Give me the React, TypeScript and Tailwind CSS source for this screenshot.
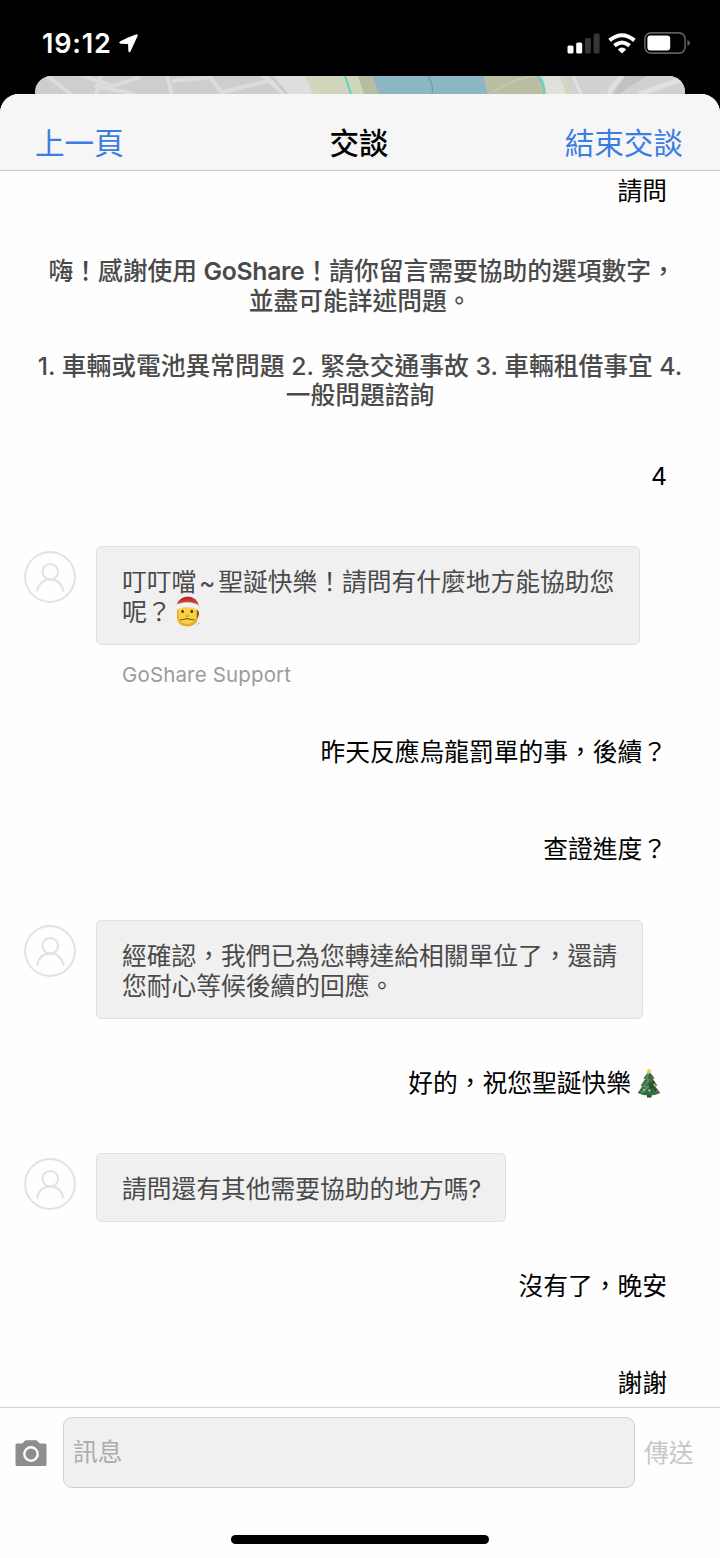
import type { ReactNode } from 'react';
import clsx from 'clsx';

function LocationArrow() {
  return (
    <svg className="h-[19px] w-[19px]" viewBox="0 0 19 19" fill="#fff" stroke="#fff" strokeWidth="0.9" strokeLinejoin="round">
      <path d="M17.2 0.8 C18.2 0.5 18.6 1 18.2 1.9 L11 17.5 C10.6 18.3 9.9 18.2 9.9 17.4 L9.5 9.7 L1.3 9.2 C0.4 9.1 0.4 8.2 1.2 7.8 Q9 3.6 17.2 0.8 Z" />
    </svg>
  );
}

function SignalIcon() {
  return (
    <svg className="h-[21px] w-[33px]" viewBox="0 0 33 21">
      <rect x="0.5" y="12.5" width="6" height="8" rx="1.5" fill="#fff" />
      <rect x="9.2" y="9.5" width="6" height="11" rx="1.5" fill="#fff" />
      <rect x="17.9" y="5" width="6" height="15.5" rx="1.5" fill="#363636" />
      <rect x="26.6" y="0.5" width="6" height="20" rx="1.5" fill="#363636" />
    </svg>
  );
}

function WifiIcon() {
  return (
    <svg className="h-[21px] w-[28px]" viewBox="0 0 28 21" fill="none" stroke="#fff" strokeWidth="4">
      <path d="M1.6 7.4 Q14 -3 26.4 7.4" />
      <path d="M6.4 12.6 Q14 6.4 21.6 12.6" />
      <path d="M14 20.5 L9.8 16.4 Q14 12.8 18.2 16.4 Z" fill="#fff" stroke="none" />
    </svg>
  );
}

function BatteryIcon() {
  return (
    <svg className="h-[22px] w-[47px]" viewBox="0 0 47 22">
      <rect x="0.9" y="0.9" width="40.2" height="20.2" rx="6" fill="none" stroke="#5e5e5e" strokeWidth="1.6" />
      <rect x="3.4" y="3.6" width="22.8" height="14.8" rx="3" fill="#fff" />
      <path d="M43.4 7.8 Q46 9 46 11 Q46 13 43.4 14.2 Z" fill="#5e5e5e" />
    </svg>
  );
}

function MapStrip() {
  return (
    <svg className="block h-[18px] w-full" viewBox="0 0 650 18" preserveAspectRatio="none">
      <rect width="650" height="18" fill="#cecece" />
      <g stroke="#dcdcdc" strokeWidth="4" fill="none">
        <path d="M12 0 L36 18 M43 -2 L78 10 M66 -1 L61 18 M78 10 L105 1 M60 10 L100 18 M132 0 L137 18 M137 5 L175 1 L188 18 M188 16 L240 3" />
      </g>
      <path d="M225 0 L246 18 H282 L270 0 Z" fill="#dedede" />
      <path d="M236 0 L252 18" stroke="#cbcbcb" strokeWidth="3" />
      <path d="M270 0 H338 L344 18 H278 Z" fill="#cfd6bc" />
      <path d="M323 0 H340 L345 18 H329 Z" fill="#b5bda2" />
      <path d="M338 0 H449 L453 18 H344 Z" fill="#8db6c5" />
      <path d="M393 0 Q399 9 397 18" stroke="#6f929e" strokeWidth="1" fill="none" />
      <path d="M449 0 H503 Q512 9 510 18 H453 Z" fill="#b9bea5" />
      <path d="M455 18 Q475 3 500 0" stroke="#c6cab5" strokeWidth="1.5" fill="none" />
      <path d="M505 0 H650 V18 H511 Q511 9 505 0 Z" fill="#d1d1d1" />
      <path d="M508 0 H526 L532 18 H512 Z" fill="#dfe2d9" />
      <path d="M310 0 L316 18 M503 0 Q510 8 509 18" stroke="#62cfc5" strokeWidth="2" fill="none" />
      <path d="M527 0 L534 18" stroke="#d2d8bd" strokeWidth="5" />
      <g stroke="#e0e0e0" fill="none">
        <path d="M538 0 L546 18" strokeWidth="3" />
        <path d="M588 0 Q578 8 574 18 M604 18 L650 2" strokeWidth="5" />
      </g>
      <path d="M590 0 H612 L584 18 H578 Z" fill="#c2c2c2" />
    </svg>
  );
}

function Avatar() {
  return (
    <svg className="mt-[5px] h-[52px] w-[52px] shrink-0" viewBox="0 0 52 52" fill="none" stroke="#e2e2e2" strokeWidth="2">
      <circle cx="26" cy="26" r="24.9" />
      <circle cx="26.3" cy="20.8" r="7.8" />
      <path d="M13 40.5 C14.5 33 19 28.6 26.3 28.6 C33.5 28.6 38 33 39.5 40.5" />
    </svg>
  );
}

function SantaEmoji() {
  return (
    <svg className="-my-2 ml-[2px] inline-block h-[31px] w-[27px] align-[2px]" viewBox="0 0 27 31">
      <path d="M3 10 V21 Q3 30 13 30.5 Q24 30 24 20 V10 Z" fill="#e9ad25" />
      <path d="M23 14 Q25.5 15 25 19 L23 23 Z" fill="#8d5a1b" />
      <path d="M4.5 9 H22 V20 Q22 27.5 13 28 Q4.5 27.5 4.5 20 Z" fill="#fbd044" />
      <ellipse cx="8.6" cy="15.4" rx="1.3" ry="1.7" fill="#4c3414" />
      <ellipse cx="17.8" cy="15.4" rx="1.3" ry="1.7" fill="#4c3414" />
      <path d="M12 18.5 Q11.6 20.6 13.3 20.6 Q15 20.6 14.6 18.5" fill="none" stroke="#d3982a" strokeWidth="0.9" />
      <path d="M6 24 Q9.5 23.8 13.2 22.4 Q17 23.8 20.5 24" fill="none" stroke="#7a5115" strokeWidth="1.1" />
      <path d="M3 8 Q6 0.5 14 0.5 Q23 1 25 10 Z" fill="#c93a2d" />
      <path d="M7 4 Q12 0.5 18 2.5" fill="none" stroke="#a32017" strokeWidth="1" />
      <path d="M1.5 12.5 Q0.5 9 4 8 Q13 4.5 22.5 8 Q26.5 9.5 25.5 13 Q23 14.5 21 12.5 Q13 9.5 5.5 12.5 Q3 14.5 1.5 12.5 Z" fill="#f5f3f1" stroke="#d8d4d0" strokeWidth="0.5" />
      <path d="M23.5 28.5 L26 26.5" stroke="#bdbdbd" strokeWidth="1" />
    </svg>
  );
}

function TreeEmoji() {
  return (
    <svg className="-my-2 ml-[6px] mr-[6px] inline-block h-[30px] w-[24px] align-[2px]" viewBox="0 0 24 30">
      <rect x="10" y="25" width="4.5" height="4.5" fill="#55351d" />
      <path d="M12 2.5 L17.5 10.5 L15.8 11 L20.3 17.5 L18.2 18.3 L23.3 25 Q18 27.8 12 27.3 Q6 27.8 0.7 25 L5.3 18.3 L3.8 17.5 L8.2 11 L6.5 10.5 Z" fill="#2f7041" />
      <path d="M12 4 L9 11 L12 12 L6.5 18 L11 19 L4 25" fill="none" stroke="#579367" strokeWidth="1.8" />
      <path d="M17 13 L15 18 L19 23 M13 15 L14 24" fill="none" stroke="#1c4e2c" strokeWidth="1.6" />
      <path d="M12 0 L13 2 L15 2.4 L13.4 3.8 L13.8 6 L12 4.9 L10.2 6 L10.6 3.8 L9 2.4 L11 2 Z" fill="#f1cf4a" />
      <circle cx="15" cy="9" r="1.3" fill="#b83d3c" />
      <circle cx="17.5" cy="17" r="1.2" fill="#d8b149" />
      <circle cx="9" cy="15.5" r="1.2" fill="#cf4740" />
      <circle cx="7" cy="22" r="1.2" fill="#cfaf58" />
      <circle cx="20" cy="23.5" r="1.2" fill="#c53e3a" />
      <circle cx="12.5" cy="22.5" r="1.2" fill="#9ebfd0" />
    </svg>
  );
}

function CameraIcon() {
  return (
    <svg className="h-[26px] w-[32px]" viewBox="0 0 32 26">
      <path d="M2 3.5 H7.2 L9.6 0.9 Q10.2 0.3 11 0.3 H21 Q21.8 0.3 22.4 0.9 L24.8 3.5 H30 Q31.5 3.5 31.5 5 V24.5 Q31.5 26 30 26 H2 Q0.5 26 0.5 24.5 V5 Q0.5 3.5 2 3.5 Z" fill="#8e8e91" />
      <circle cx="16" cy="14" r="6.7" fill="none" stroke="#fff" strokeWidth="2.4" />
    </svg>
  );
}

function UserMessage({ className, children }: { className: string; children: ReactNode }) {
  return <p className={clsx('h-[30px] shrink-0 whitespace-nowrap pr-[53px] text-right leading-[30px] text-black', className)}>{children}</p>;
}

function SupportMessage({ className, bubbleClassName, children }: { className: string; bubbleClassName: string; children: ReactNode }) {
  return (
    <div className={clsx('flex shrink-0 items-start gap-[20px] pl-[24px]', className)}>
      <Avatar />
      <div className={clsx('whitespace-nowrap rounded-[5px] border-[1.5px] border-[#e0e0e0] bg-[#f0f0f0] pl-[25px] pt-[21px] leading-[29.5px] text-[#4a4a4a]', bubbleClassName)}>
        {children}
      </div>
    </div>
  );
}

export default function App() {
  return (
    <div className="flex h-[1558px] w-[720px] flex-col overflow-hidden bg-black font-['Inter','Noto_Sans_CJK_TC',sans-serif]">
      <div className="flex h-[76px] shrink-0 items-center pl-[42px] pr-[29px] pt-[10px]">
        <span className="w-[77px] whitespace-nowrap pt-[2px] text-[27px] font-semibold leading-[30px] tracking-[0.8px] text-white">19:12</span>
        <LocationArrow />
        <div className="ml-auto flex items-center gap-[8px]">
          <SignalIcon />
          <WifiIcon />
          <BatteryIcon />
        </div>
      </div>

      <div className="mx-[35px] h-[18px] shrink-0 overflow-hidden rounded-t-[16px]">
        <MapStrip />
      </div>

      <div className="flex min-h-0 flex-1 flex-col overflow-hidden rounded-t-[19px] bg-[#fefefe]">
        <header className="grid h-[77px] shrink-0 grid-cols-3 items-center border-b-[1.5px] border-[#cbcbcd] bg-[#f6f6f6] pl-[35px] pr-[37px] pt-[22px] text-[29.6px] leading-[36px]">
          <button className="text-left text-[#3b7de3]">上一頁</button>
          <h1 className="text-center font-medium text-black">交談</h1>
          <button className="text-right text-[#3b7de3]">結束交談</button>
        </header>

        <main className="flex h-[1236px] shrink-0 flex-col overflow-hidden text-[24.75px]">
          <UserMessage className="mt-[5px]">請問</UserMessage>

          <p className="mt-[51px] shrink-0 whitespace-nowrap text-center font-medium leading-[29.5px] text-[#4a4a4a]">
            <span className="block pl-[4px]">
              嗨！感謝使用 <span className="font-semibold tracking-[-0.3px]">GoShare</span>！請你留言需要協助的選項數字，
            </span>
            並盡可能詳述問題。
          </p>
          <p className="mt-[36px] shrink-0 whitespace-nowrap text-center font-medium leading-[29px] text-[#4a4a4a]">
            1. 車輛或電池異常問題 2. 緊急交通事故 3. 車輛租借事宜 4.
            <br />
            一般問題諮詢
          </p>

          <UserMessage className="mt-[51px]">4</UserMessage>

          <SupportMessage className="mt-[55px]" bubbleClassName="h-[99px] w-[544px]">
            叮叮噹<span className="inline-block w-[22px] text-center">~</span>聖誕快樂！請問有什麼地方能協助您
            <br />
            呢？
            <SantaEmoji />
          </SupportMessage>
          <p className="mt-[15px] h-[30px] shrink-0 pl-[122px] text-[20.5px] leading-[30px] tracking-[0.15px] text-[#9b9b9b]">GoShare Support</p>

          <UserMessage className="mt-[47px]">昨天反應烏龍罰單的事，後續？</UserMessage>
          <UserMessage className="mt-[67px]">查證進度？</UserMessage>

          <SupportMessage className="mt-[56px]" bubbleClassName="h-[99px] w-[547px]">
            經確認，我們已為您轉達給相關單位了，還請
            <br />
            您耐心等候後續的回應。
          </SupportMessage>

          <UserMessage className="mt-[49px]">
            好的，祝您聖誕快樂
            <TreeEmoji />
          </UserMessage>

          <SupportMessage className="mt-[55px]" bubbleClassName="h-[69px] w-[410px]">
            請問還有其他需要協助的地方嗎?
          </SupportMessage>

          <UserMessage className="mt-[49px]">沒有了，晚安</UserMessage>
          <UserMessage className="mt-[67px]">謝謝</UserMessage>
        </main>

        <footer className="flex flex-1 flex-col items-center border-t-[1.5px] border-[#d2d2d2] pt-[9px]">
          <div className="flex w-full items-center pl-[15px]">
            <CameraIcon />
            <div className="ml-[16px] flex h-[71px] w-[572px] items-center rounded-[9px] border-[1.5px] border-[#cfcfcf] bg-[#f0f0f0] pl-[9px] text-[24.75px] text-[#acacac]">
              訊息
            </div>
            <button className="ml-[9px] pt-[3px] text-[24.75px] text-[#c7c7c7]">傳送</button>
          </div>
          <div className="mt-[47px] h-[9px] w-[258px] rounded-full bg-black" />
        </footer>
      </div>
    </div>
  );
}
